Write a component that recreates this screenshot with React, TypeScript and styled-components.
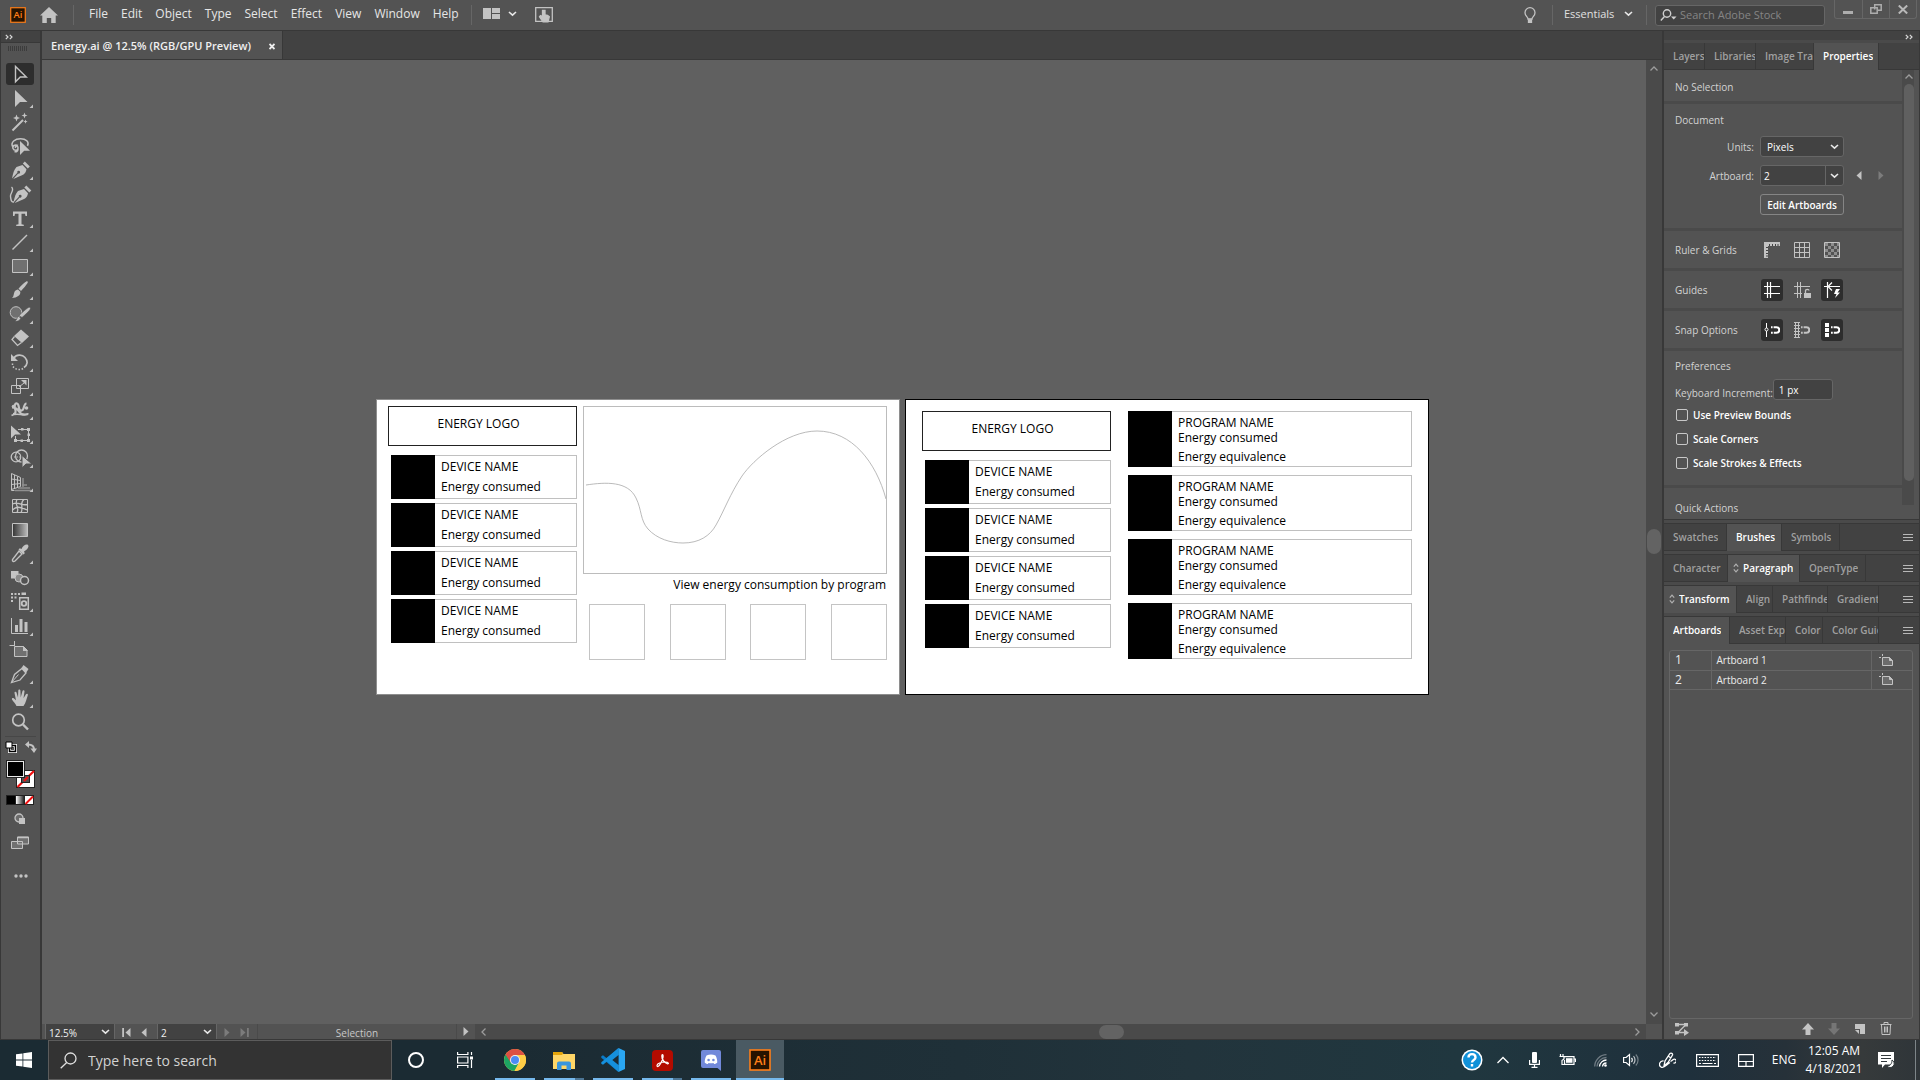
import React from "react";
import styled, { createGlobalStyle } from "styled-components";

const C = {
  panel: "#535353",
  dark: "#424242",
  line: "#383838",
  groove: "#4a4a4a",
  canvas: "#606060",
  edge: "#666666",
  icon: "#c3c3c3",
  text: "#d6d6d6",
  dim: "#a0a0a0",
  white: "#f0f0f0",
};

const Global = createGlobalStyle`
  * { box-sizing: border-box; }
  html, body { margin: 0; height: 100%; background: ${C.canvas}; overflow: hidden; }
  body { font-family: "Open Sans", "Noto Sans", sans-serif; font-size: 10px; line-height: 14px; color: ${C.text}; }
  button, input, select { font: inherit; color: inherit; margin: 0; padding: 0; border: 0; background: none; border-radius: 0; outline: none; }
  svg { display: block; flex: none; }
`;

const Screen = styled.div`
  display: grid;
  grid-template-rows: auto minmax(0, 1fr) auto;
  height: 100vh;
  background: ${C.panel};
`;

/* ---------- menu bar ---------- */
const MenuBar = styled.header`
  display: flex;
  align-items: center;
  height: 31px;
  padding-left: 10px;
  border-bottom: 1px solid ${C.line};
  font-size: 12px;
`;
const HomeButton = styled.button`
  margin: 0 15px 0 14px;
`;
const Rule = styled.span`
  width: 1px;
  height: 20px;
  background: ${C.edge};
`;
const Menus = styled.nav`
  display: flex;
  gap: 13px;
  padding: 0 12px 2px 15px;
`;
const MenuItem = styled.button`
  color: #e6e6e6;
  line-height: 20px;
`;
const LayoutButton = styled.button`
  display: flex;
  align-items: center;
  gap: 8px;
  margin: 0 18px 0 11px;
  padding-bottom: 3px;
`;
const MenuRight = styled.div`
  display: flex;
  align-items: center;
  align-self: stretch;
  margin-left: auto;
`;
const BulbButton = styled.button`
  padding: 0 16px 0 0;
`;
const Workspace = styled.button`
  display: flex;
  align-items: center;
  justify-content: space-between;
  width: 93px;
  padding: 0 13px 2px 11px;
  font-size: 11px;
  color: #e0e0e0;
`;
const StockSearch = styled.label`
  display: flex;
  align-items: center;
  gap: 3px;
  width: 170px;
  height: 21px;
  margin: 0 9px 0 8px;
  padding-left: 4px;
  border: 1px solid ${C.edge};
  border-radius: 3px;
  background: ${C.dark};
  input {
    width: 130px;
    font-size: 11px;
  }
  input::placeholder { color: #858585; opacity: 1; }
`;
const WindowButtons = styled.div`
  display: flex;
  align-self: flex-start;
  height: 19px;
  margin-right: 3px;
  border: 1px solid ${C.edge};
  border-top: 0;
  border-radius: 0 0 3px 3px;
`;
const WindowButton = styled.button`
  display: grid;
  place-items: center;
  width: 27px;
  & + & { border-left: 1px solid ${C.edge}; }
`;

/* ---------- body ---------- */
const Body = styled.div`
  display: grid;
  grid-template-columns: auto minmax(0, 1fr) auto;
  min-height: 0;
  border-bottom: 1px solid ${C.line};
`;
const Tools = styled.aside`
  display: flex;
  flex-direction: column;
  width: 42px;
  border-left: 1px solid ${C.line};
  border-right: 2px solid ${C.line};
`;
const CollapseBar = styled.div<{ $end?: boolean }>`
  display: flex;
  align-items: center;
  justify-content: ${(p) => (p.$end ? "flex-end" : "flex-start")};
  height: 12px;
  padding: 0 6px 0 4px;
  background: ${C.dark};
  border-bottom: 1px solid ${C.line};
`;
const Grip = styled.div`
  height: 19px;
  padding: 3px 0 0 7px;
`;
const ToolButton = styled.button<{ $on?: boolean }>`
  display: grid;
  place-items: center;
  width: 28px;
  height: 22px;
  margin: 1px 0 1px 5px;
  border-radius: 3px;
  background: ${(p) => (p.$on ? "#2d2d2d" : "transparent")};
  svg { margin: -1px 0; }
`;
const ToolRule = styled.div`
  height: 1px;
  margin: 2px 4px 0 4px;
  background: #474747;
`;
const SwatchRow = styled.div`
  display: flex;
  align-items: center;
  justify-content: space-between;
  height: 21px;
  padding: 0 3px 1px 4px;
`;
const SwatchBlock = styled.div`
  padding: 2px 0 7px 5px;
`;
const ColorModes = styled.div`
  padding: 0 0 2px 5px;
`;
const MoreButton = styled.button`
  display: grid;
  place-items: center;
  height: 24px;
  margin-top: 9px;
`;

const Doc = styled.main`
  display: grid;
  grid-template-rows: auto minmax(0, 1fr) auto;
  min-width: 0;
  border-right: 2px solid ${C.line};
`;
const DocTabs = styled.div`
  display: flex;
  height: 29px;
  background: ${C.dark};
  border-bottom: 1px solid ${C.line};
`;
const DocTab = styled.div`
  display: flex;
  align-items: center;
  justify-content: space-between;
  width: 241px;
  padding: 2px 7px 0 9px;
  background: ${C.panel};
  border-right: 1px solid ${C.line};
  font-size: 11px;
  font-weight: 600;
  color: ${C.white};
`;
const View = styled.div`
  display: grid;
  grid-template-columns: minmax(0, 1fr) 16px;
  min-height: 0;
`;
const Canvas = styled.div`
  position: relative;
  overflow: hidden;
  background: ${C.canvas};
`;
const VScroll = styled.div`
  display: flex;
  flex-direction: column;
  align-items: center;
  justify-content: space-between;
  padding: 5px 0 6px;
  background: ${C.groove};
`;
const Thumb = styled.div<{ $wide?: boolean }>`
  width: ${(p) => (p.$wide ? 25 : 14)}px;
  height: ${(p) => (p.$wide ? 14 : 25)}px;
  border-radius: 7px;
  background: #636363;
`;
const Space = styled.span<{ $grow: number }>`
  flex: ${(p) => p.$grow} 1 0;
`;
const Status = styled.footer`
  display: flex;
  height: 15px;
  background: ${C.panel};
`;
const StatusField = styled.label<{ $w: number }>`
  display: grid;
  grid-template-columns: minmax(0, 1fr) 17px;
  align-items: center;
  justify-items: center;
  width: ${(p) => p.$w}px;
  margin-left: 3px;
  padding-left: 3px;
  background: ${C.dark};
  border-left: 1px solid ${C.edge};
  border-right: 1px solid ${C.edge};
  color: ${C.white};
  input { width: 100%; padding-top: 2px; }
`;
const StatusNav = styled.div`
  display: flex;
  align-items: center;
  justify-content: center;
  gap: 10px;
  width: 39px;
  & > button { margin-top: 1px; }
`;
const StatusMode = styled.div`
  width: 200px;
  margin-left: 1px;
  border-left: 1px solid ${C.groove};
  border-right: 1px solid ${C.groove};
  line-height: 18px;
  text-align: center;
  color: #c8c8c8;
`;
const PlayButton = styled.button`
  width: 18px;
  display: grid;
  place-items: center;
`;
const HScroll = styled.div`
  display: flex;
  flex: 1;
  align-items: center;
  margin-right: 16px;
  padding: 0 5px;
  background: ${C.groove};
`;

/* ---------- artboards ---------- */
const Artboard = styled.section<{ $x: number; $active?: boolean }>`
  position: absolute;
  left: ${(p) => p.$x}px;
  top: 339px;
  display: flex;
  align-items: flex-start;
  gap: ${(p) => (p.$active ? 17 : 6)}px;
  width: 524px;
  height: 296px;
  padding: ${(p) => (p.$active ? "11px 16px" : "6px 11px")};
  background: #fff;
  border: 1px solid ${(p) => (p.$active ? "#000" : "#8e8e8e")};
  color: #000;
  font-size: 12px;
  font-weight: 500;
`;
const DeviceColumn = styled.div`
  display: flex;
  flex-direction: column;
  align-items: flex-end;
  gap: 4px;
  width: 189px;
`;
const LogoBox = styled.div`
  align-self: stretch;
  height: 40px;
  margin-bottom: 5px;
  padding-right: 8px;
  border: 1px solid #222;
  line-height: 34px;
  text-align: center;
`;
const Card = styled.div<{ $h: number; $w?: number }>`
  display: flex;
  width: ${(p) => p.$w ?? 186}px;
  height: ${(p) => p.$h}px;
  border: 1px solid #c0c0c0;
`;
const Block = styled.div`
  width: 44px;
  margin: -1px 6px -1px -1px;
  background: #000;
`;
const DeviceText = styled.div`
  padding-top: 1px;
  line-height: 20px;
`;
const ProgramText = styled.div`
  padding-top: 3px;
  line-height: 15px;
  p { margin: 0; }
  p:last-child { margin-top: 4px; }
`;
const ProgramColumn = styled.div`
  display: flex;
  flex-direction: column;
  gap: 8px;
`;
const GraphColumn = styled.div`
  width: 304px;
`;
const Graph = styled.div`
  height: 168px;
  border: 1px solid #bcbcbc;
`;
const Caption = styled.p`
  margin: 0 1px 9px 0;
  line-height: 21px;
  text-align: right;
`;
const Tiles = styled.div`
  display: flex;
  justify-content: space-between;
  padding-left: 6px;
`;
const Tile = styled.div`
  width: 56px;
  height: 56px;
  border: 1px solid #c4c4c4;
`;

/* ---------- right panels ---------- */
const Panels = styled.aside`
  display: flex;
  flex-direction: column;
  width: 256px;
  min-height: 0;
  border-right: 1px solid ${C.line};
  background: ${C.panel};
`;
const TabStrip = styled.div<{ $first?: boolean }>`
  display: flex;
  flex: none;
  height: ${(p) => (p.$first ? 27 : 28)}px;
  margin-top: ${(p) => (p.$first ? 0 : 3)}px;
  background: ${C.dark};
  border-top: ${(p) => (p.$first ? 0 : 1)}px solid ${C.line};
  box-shadow: inset 0 -1px ${C.line}, 0 -3px ${C.groove};
`;
const Tab = styled.button<{ $w: number; $on?: boolean; $arrow?: boolean }>`
  display: flex;
  align-items: center;
  gap: 4px;
  flex: none;
  width: ${(p) => p.$w}px;
  padding: 0 0 1px ${(p) => (p.$arrow ? 5 : 9)}px;
  border-right: 1px solid ${C.line};
  background: ${(p) => (p.$on ? C.panel : "transparent")};
  font-weight: 600;
  color: ${(p) => (p.$on ? "#fff" : C.dim)};
  span {
    min-width: 0;
    overflow: hidden;
    white-space: nowrap;
  }
`;
const MenuButton = styled.button`
  margin: 0 6px 0 auto;
`;
const Props = styled.div`
  display: grid;
  grid-template-columns: minmax(0, 1fr) 17px;
  flex: none;
  height: 450px;
  overflow: hidden;
  border-bottom: 1px solid ${C.line};
`;
const PropsScroll = styled.div`
  display: flex;
  flex-direction: column;
  align-items: center;
  gap: 3px;
  width: 12px;
  height: 435px;
  padding-top: 3px;
  background: ${C.groove};
  border-left: 1px solid ${C.groove};
`;
const PropsThumb = styled.div`
  width: 10px;
  height: 397px;
  border-radius: 5px;
  background: ${C.canvas};
`;
const Section = styled.section<{ $pad: string }>`
  padding: ${(p) => p.$pad};
  border-bottom: 3px solid ${C.groove};
  color: #d2d2d2;
  font-weight: 500;
`;
const Title = styled.h2`
  margin: 0;
  font-size: 10px;
  line-height: 14px;
  font-weight: 500;
`;
const Form = styled.div`
  display: grid;
  grid-template-columns: 79px 84px auto;
  gap: 8px 6px;
  align-items: center;
  margin-top: 9px;
  & > label { text-align: right; }
`;
const Pick = styled.div<{ $split?: boolean }>`
  display: grid;
  grid-template-columns: minmax(0, 1fr) 18px;
  height: 21px;
  align-items: center;
  border: 1px solid ${C.edge};
  border-radius: 3px;
  background: ${C.dark};
  color: #fff;
  select {
    grid-area: 1 / 1 / 2 / 3;
    appearance: none;
    height: 19px;
    padding-left: ${(p) => (p.$split ? 3 : 6)}px;
    font-weight: 500;
  }
  select option { color: #000; }
  span {
    grid-area: 1 / 2 / 2 / 3;
    display: grid;
    place-items: center;
    height: 19px;
    border-left: 1px solid ${(p) => (p.$split ? C.edge : "transparent")};
    pointer-events: none;
  }
`;
const Arrows = styled.div`
  display: flex;
  gap: 16px;
  padding-left: 6px;
`;
const EditButton = styled.button`
  grid-column: 2;
  height: 21px;
  border: 1px solid #858585;
  border-radius: 3px;
  color: #fff;
  font-weight: 600;
`;
const IconRow = styled.div`
  display: flex;
  align-items: center;
  height: 37px;
  ${Title} { width: 86px; }
`;
const IconButton = styled.button<{ $on?: boolean }>`
  display: grid;
  place-items: center;
  width: 22px;
  height: 22px;
  margin-right: 8px;
  border-radius: 3px;
  background: ${(p) => (p.$on ? "#2d2d2d" : "transparent")};
`;
const Increment = styled.label`
  display: flex;
  align-items: flex-end;
  margin: 6px 0 3px;
  input {
    width: 60px;
    height: 21px;
    padding-left: 5px;
    border: 1px solid ${C.edge};
    border-radius: 3px;
    background: ${C.dark};
    color: #fff;
  }
`;
const Check = styled.label`
  display: flex;
  align-items: center;
  gap: 5px;
  height: 24px;
  padding-left: 1px;
  color: #fff;
  font-weight: 600;
  input {
    appearance: none;
    width: 12px;
    height: 12px;
    border: 1px solid #c8c8c8;
    border-radius: 2px;
  }
`;
const ListBox = styled.div`
  flex: 1;
  min-height: 0;
  margin: 6px 6px 0 5px;
  border: 1px solid ${C.edge};
  border-radius: 3px;
`;
const List = styled.table`
  width: 100%;
  border-collapse: collapse;
  table-layout: fixed;
  td {
    height: 19px;
    padding: 0 5px;
    border-bottom: 1px solid ${C.edge};
    color: #ececec;
    font-weight: 500;
  }
  td:first-child { width: 41px; font-size: 12px; }
  td + td { border-left: 1px solid ${C.edge}; }
  td:last-child { width: 41px; padding-left: 7px; }
`;
const PanelFooter = styled.div`
  display: flex;
  align-items: center;
  justify-content: space-between;
  height: 20px;
  padding: 0 27px 1px 11px;
`;
const FooterTools = styled.div`
  display: flex;
  align-items: center;
  gap: 14px;
`;

/* ---------- taskbar ---------- */
const Taskbar = styled.footer`
  display: flex;
  height: 40px;
  background: linear-gradient(90deg, #1b2b33 0, #1b2b33 26%, #1f3038 50%, #22343c 62%, #20373f 76%, #1f303c 88%, #263139 93%, #363a3b 97%, #2f3539 100%);
  color: #fff;
`;
const Search = styled.label`
  display: flex;
  align-items: center;
  gap: 11px;
  width: 344px;
  padding-left: 11px;
  background: #333333;
  border: 1px solid #5c5c5c;
  input { flex: 1; font-size: 14px; }
  input::placeholder { color: #d2d2d2; opacity: 1; }
`;
const TaskButton = styled.button<{ $on?: boolean }>`
  position: relative;
  display: grid;
  place-items: center;
  width: 48px;
  height: 40px;
  margin-right: 1px;
  background: ${(p) => (p.$on ? "#4a5a63" : "transparent")};
`;
const Apps = styled.div`
  display: flex;
  margin-left: 1px;
`;
const Running = styled.i<{ $kind: string }>`
  position: absolute;
  bottom: 0;
  left: ${(p) => (p.$kind === "full" ? 0 : 4)}px;
  right: ${(p) => (p.$kind === "full" ? 0 : 4)}px;
  height: 2px;
  background: ${(p) =>
    p.$kind === "many"
      ? "linear-gradient(90deg, #76b9ed 31px, #4d7696 31px)"
      : "#76b9ed"};
`;
const Tray = styled.div`
  display: flex;
  margin-left: auto;
`;
const TrayButton = styled.button<{ $w: number }>`
  display: grid;
  place-items: center;
  width: ${(p) => p.$w}px;
  font-size: 12px;
  line-height: 18px;
  white-space: nowrap;
`;
const Peek = styled.button`
  width: 5px;
  margin-left: 9px;
  border-left: 1px solid #7d8589;
`;

/* ---------- drawings ---------- */
const ChevronDown = ({ s = "#e8e8e8" }: { s?: string }) => (
  <svg width="9" height="6" viewBox="0 0 9 6" fill="none" stroke={s} strokeWidth="1.6">
    <path d="M1 1l3.500 3.200L8 1" />
  </svg>
);
const Caret = ({ r = 0 }: { r?: number }) => (
  <svg width="8" height="8" viewBox="0 0 8 8" fill="none" stroke="#9c9c9c" strokeWidth="1.300">
    <path d="M0.500 5.500L4 2l3.500 3.500" transform={`rotate(${r} 4 4)`} />
  </svg>
);
const Chevrons = () => (
  <svg width="8" height="6" viewBox="0 0 8 6" fill="none" stroke="#d8d8d8" strokeWidth="1.200">
    <path d="M0.800 0.800L3 3 0.800 5.200M4.800 0.800L7 3 4.800 5.200" />
  </svg>
);
const Tri = ({ r = 0, c = C.icon, bar }: { r?: number; c?: string; bar?: boolean }) => (
  <svg width={bar ? 9 : 6} height="9" viewBox={bar ? "0 0 9 9" : "0 0 6 9"} fill={c}>
    <g transform={`rotate(${r} ${bar ? 4.5 : 3} 4.500)`}>
      <path d="M0.500 0L5.500 4.500 0.500 9z" />
      {bar && <path d="M7 0h1.800v9H7z" />}
    </g>
  </svg>
);
const Hamburger = () => (
  <svg width="10" height="8" viewBox="0 0 10 8" stroke="#b8b8b8">
    <path d="M0 .5h10M0 3.500h10M0 6.500h10" />
  </svg>
);
const UpDown = () => (
  <svg width="6" height="10" viewBox="0 0 6 10" fill="none" stroke="#b0b0b0" strokeWidth="1.200">
    <path d="M.8 3.600L3 1.200l2.200 2.400M.8 6.400L3 8.800l2.200-2.400" />
  </svg>
);
const AiLogo = ({ size }: { size: number }) => (
  <svg width={size} height={size} viewBox="0 0 22 22">
    <rect x="1" y="1" width="20" height="20" fill="#261300" stroke="#ff7f18" strokeWidth="1.600" />
    <text x="11" y="15.500" textAnchor="middle" fontFamily="Open Sans, sans-serif" fontWeight="600" fontSize="13" fill="#ff7f18">
      Ai
    </text>
  </svg>
);

const F = { fill: C.icon, stroke: "none" };
const nib = (
  <>
    <path {...F} d="M6 20.500C7 15.500 8 11.500 10.500 9L16.500 7l4 4.200c-.5 2.800-1.500 4-3 5.300-2.500 1.500-6 2.500-10.300 4.500l5-5.500a1.400 1.400 0 1 0-.8-.8z" />
    <path {...F} d="M16.800 5.500l2-2 5 5-2 2z" />
  </>
);
const corner = <path {...F} d="M27 18.500V22h-3.500z" />;

const tools: [string, React.ReactNode, boolean?][] = [
  ["Selection", <path d="M9.500 4.500v15.300l4.800-4.800h6z" strokeWidth="1.400" />],
  ["Direct Selection", <path {...F} d="M9 4v17l5-5h7.500z" />, true],
  ["Magic Wand", <><path d="M6.500 20.500L17 10" strokeWidth="2" /><path {...F} d="M10.500 4.500l1 2.500 2.500 1-2.500 1-1 2.500-1-2.500-2.500-1 2.500-1zM18.500 2.500l.8 2.200 2.200.8-2.200.8-.8 2.200-.8-2.200-2.200-.8 2.200-.8zM19.500 9.500l.6 1.500 1.500.6-1.500.6-.6 1.500-.6-1.500-1.500-.6 1.500-.6z" /></>],
  ["Lasso", <><path d="M6.500 12.500C4.500 8 9 4.800 14.500 4.800s9 3 7 7M12 11.500c-3-1.500-6 .5-5 3s5 2.500 5-.5-3-2-2.500 0M12 15c0 3-2 3-3.500 2.500" strokeWidth="1.500" /><path {...F} d="M14 7v14l4.200-4.200H24z" /></>],
  ["Pen", nib, true],
  ["Curvature", <><g transform="translate(1.500 0)">{nib}</g><path d="M5.500 5C9 8 4 11 4.500 14.500S5 20 8 20" strokeWidth="1.400" /></>],
  ["Type", <path {...F} d="M7 5.500h14V10h-1.500l-.5-2.300h-3.500v10.600l2.300.5V20h-7.600v-1.200l2.300-.5V7.700H9L8.500 10H7z" />, true],
  ["Line Segment", <path d="M6.500 19.500L21 5" strokeWidth="1.500" />, true],
  ["Rectangle", <path d="M6.500 5.500h15v13h-15z" fill="#707070" />, true],
  ["Paintbrush", <path {...F} d="M21.500 3.500c1 .8-.5 3-6.500 9.500l-2.500-2.300C18 5 20.500 2.800 21.500 3.500zM12 11.500l2.300 2.300c.5 3.500-3.300 6-8.300 6.200 2-1.500 1.500-4 2.500-6.200 1-1.600 2-2 3.500-2.300z" />, true],
  ["Shaper", <><circle cx="10" cy="10.500" r="5.800" fill="#707070" /><path {...F} stroke={C.panel} strokeWidth=".6" d="M24 5.500c1.500 1-.5 3.500-8 10L13 13.500C20.500 6.500 23 4.500 24 5.500zM12.500 14.300l2.300 2c-1 2.200-2.800 3.300-5.800 3 1.800-1 1.800-3.800 3.500-5z" /></>, true],
  ["Eraser", <><path {...F} d="M15 3.500l8 7-7 6.500-8-7z" /><path d="M8.500 10.500l-2.500 3 5.500 6 4-3" strokeWidth="1.300" /></>, true],
  ["Rotate", <><path d="M7.500 8.500C10 4.500 16 4 19 7.500s3 7-1 10" strokeWidth="1.700" /><path d="M17 18.500C13 21 8 19 6.500 15.500V12" strokeDasharray="1.500 1.700" strokeWidth="1.500" /><path {...F} d="M5 4v7h7z" /></>, true],
  ["Scale", <><path d="M10.500 4.500h12v10h-12zM5.500 11.500h9v8h-9z" /><path d="M13 13l5-4" /><path {...F} d="M15 6h5.500v5.500z" /></>, true],
  ["Width", <><path d="M7 16c3 0 3-3 2-5.500S9 5 11 5.500s1.500 4 2.500 6 3.500 1 4-1 1-5 3-5M6 9.500c4 0 5 1 7 4s5 4 9 2.500" strokeWidth="2.200" /><path d="M5.500 17.500c6-3.500 12 1.500 17-2" strokeWidth="1.500" /><circle cx="7.500" cy="8.500" r="1.800" {...F} /><circle cx="20.500" cy="10" r="1.800" {...F} /></>, true],
  ["Free Transform", <><path d="M12 7.500h10.500v11h-13V14" /><path {...F} d="M5 3.500v13l4-4h6zM21 6h3v3h-3zM21 17h3v3h-3zM8 17h3v3H8zM15 6h2.500v2.500H15zM21.500 11.500H24V14h-2.500zM14.500 17.500H17V20h-2.500z" /></>, true],
  ["Shape Builder", <><circle cx="10" cy="11" r="4.800" strokeWidth="1.300" /><circle cx="15.500" cy="10" r="6" strokeWidth="1.300" /><path d="M8 11h9" strokeDasharray="1.300 1.300" /><path {...F} stroke={C.panel} d="M16 9.500v12.300l4-3.800h6z" /></>, true],
  ["Perspective Grid", <><path d="M5.500 3.500v17h3M5.500 3.500l9 4v9l-9 3M5.500 9l9 1.500M5.500 14.500l9-1M8.500 5v13.500M11.500 6.500v11" /><path d="M17 8v9M16 15h5M12 18h12M9 20.500h16" stroke="#909090" strokeWidth="1.500" /></>, true],
  ["Mesh", <><path d="M6.500 5.500h15v13h-15z" /><path d="M6.500 10c6-3 8 2 15 .5M6.500 16c5-5 9-2 15 0M11 5.500c-3 5 3 8 0 13M18 5.500c-5 3 0 9-3 13" strokeWidth="1.300" /></>],
  ["Gradient", <path d="M6.500 5.500h15v13h-15z" fill="url(#toolGradient)" />],
  ["Eyedropper", <><path d="M13 9l3 3-7 7c-1.500 1-3 .5-2.500-1.500z" strokeWidth="1.400" /><path {...F} d="M12.500 7.500l1.300-1.300 1.700.8c1-3 5-5.500 6.500-4s-.8 5-4 6.500l.8 1.700L17.500 12.500z" /></>, true],
  ["Blend", <><path {...F} d="M5 5h7.500v7.500H5z" /><circle cx="13" cy="12" r="4" fill="#8a8a8a" /><circle cx="18.500" cy="14.500" r="4" fill={C.panel} strokeWidth="1.500" /></>],
  ["Symbol Sprayer", <><path {...F} d="M5 3h2v2H5zM8.500 3h2v2h-2zM12 3h2v2h-2zM5 6.500h2v2H5zM8.500 6.500h2v2h-2zM5 10h2v2H5zM15.500 2.500h4.500V5h-4.500z" /><path d="M13.700 7.700h8.600v11.600h-8.600z" strokeWidth="1.500" /><circle cx="18" cy="13.500" r="2.300" strokeWidth="1.800" /></>, true],
  ["Column Graph", <><path d="M5.500 4v15.500H22" /><path {...F} d="M9 11h3v7H9zM13.500 5h3v13h-3zM18.500 8h3v10h-3z" /></>, true],
  ["Artboard", <><path d="M3.500 7.500h5M8.500 3v5M8.500 8.500h9l3.500 3.500v6.500H8.500z" fill="#707070" /><path {...F} d="M17 8v5h5z" /></>],
  ["Slice", <><path d="M16 6.500l4 4.500-6 7-8.500 2.500 3-8z" strokeWidth="1.300" /><path d="M5.500 20.500l7-8" /><path {...F} d="M15.500 6l2-3 5 4-2.500 4z" /></>, true],
  ["Hand", <path {...F} d="M10.500 20c-1-2.500-3.500-4.500-4.500-6.500-.6-1.400 1-2 2-1l2 1.800L8.500 7c-.2-1.500 1.600-1.800 2-.4l1.500 5L12.300 4.500c0-1.500 2-1.500 2.100 0l.3 7L16.500 5c.4-1.400 2.200-1 2 .5L17.500 12.300l2.500-4c.8-1.200 2.300-.3 1.800 1C20.500 13 20 17 17.500 20z" />, true],
  ["Zoom", <><circle cx="12.500" cy="10" r="5.800" strokeWidth="1.700" /><path d="M17 14.500l5 5" strokeWidth="2.400" /></>],
];

const Glyph = ({ children, w = 16, h = 16, s = C.icon, sw = 1 }: { children: React.ReactNode; w?: number; h?: number; s?: string; sw?: number }) => (
  <svg width={w} height={h} viewBox={`0 0 ${w} ${h}`} fill="none" stroke={s} strokeWidth={sw}>
    {children}
  </svg>
);

const Magnet = ({ c }: { c: string }) => (
  <path d="M7 5.200h5.500a2.800 2.800 0 0 1 0 5.600H7" stroke={c} strokeWidth="2" strokeDasharray="1.600 1 14.200 1 2" />
);

const Devices = () => (
  <DeviceColumn>
    <LogoBox>ENERGY LOGO</LogoBox>
    {[1, 2, 3, 4].map((n) => (
      <Card key={n} $h={44}>
        <Block />
        <DeviceText>
          <div>DEVICE NAME</div>
          <div>Energy consumed</div>
        </DeviceText>
      </Card>
    ))}
  </DeviceColumn>
);

type TabDef = { name: string; w: number; on?: boolean; arrow?: boolean };
const Strip = ({ tabs, first }: { tabs: TabDef[]; first?: boolean }) => (
  <TabStrip $first={first} role="tablist">
    {tabs.map((t) => (
      <Tab key={t.name} $w={t.w} $on={t.on} $arrow={t.arrow} role="tab" aria-selected={!!t.on}>
        {t.arrow && <UpDown />}
        <span>{t.name}</span>
      </Tab>
    ))}
    {!first && (
      <MenuButton aria-label="Panel menu">
        <Hamburger />
      </MenuButton>
    )}
  </TabStrip>
);

const ArtboardIcon = () => (
  <Glyph w={15} h={13}>
    <path d="M0 3.500h2M3.500 0v2M3.500 3.500h7l3 3v5h-10z" fill="#6c6c6c" />
    <path d="M10.500 3.500v3h3" fill={C.icon} />
  </Glyph>
);

export default function App() {
  return (
    <Screen>
      <Global />
      <MenuBar>
        <AiLogo size={16} />
        <HomeButton aria-label="Home">
          <svg width="18" height="16" viewBox="0 0 18 16" fill={C.icon}>
            <path d="M9 0l9 8.500h-2.300V16h-4.500v-5H6.800v5H2.300V8.500H0z" />
          </svg>
        </HomeButton>
        <Rule />
        <Menus>
          {["File", "Edit", "Object", "Type", "Select", "Effect", "View", "Window", "Help"].map((m) => (
            <MenuItem key={m}>{m}</MenuItem>
          ))}
        </Menus>
        <Rule />
        <LayoutButton aria-label="Arrange documents">
          <svg width="17" height="11" viewBox="0 0 17 11" fill={C.icon}>
            <path d="M0 0h8v11H0zM9 0h8v5H9zM9 6h8v5H9z" />
          </svg>
          <ChevronDown />
        </LayoutButton>
        <button aria-label="Touch workspace">
          <svg width="18" height="16" viewBox="0 0 18 16" fill="none" stroke={C.icon} strokeWidth="1.300">
            <path d="M.7 .7h16.600v13.600H.7z" />
            <path d="M7.500 3.500v6L5.500 8.500l-1 1.300 3.500 5h5l1.300-5-1.800-1.500-2.500-.5V3.500z" fill={C.icon} />
          </svg>
        </button>
        <MenuRight>
          <BulbButton aria-label="Learn">
            <Glyph w={12} h={17} sw={1.300}>
              <path d="M4 12c0-2-3-3-3-6.300a5 5 0 0 1 10 0C11 9 8 10 8 12z" />
              <path d="M4.500 13h3v2.300h-3z" fill={C.icon} />
            </Glyph>
          </BulbButton>
          <Rule />
          <Workspace>
            Essentials <ChevronDown />
          </Workspace>
          <Rule />
          <StockSearch>
            <Glyph w={17} h={13} s="#d0d0d0" sw={1.400}>
              <circle cx="7" cy="4.500" r="3.700" />
              <path d="M4.500 7.500L.8 11.500" />
              <path d="M11 7.500h5.500L13.700 10.500z" fill="#d0d0d0" stroke="none" />
            </Glyph>
            <input aria-label="Search Adobe Stock" placeholder="Search Adobe Stock" />
          </StockSearch>
          <WindowButtons>
            <WindowButton aria-label="Minimize">
              <Glyph w={11} h={10} s="#adadad" sw={3}><path d="M0 8.500h10" /></Glyph>
            </WindowButton>
            <WindowButton aria-label="Restore">
              <Glyph w={12} h={10} s="#adadad" sw={1.500}><path d="M4.700 5.500V.8h6.500v5.400H8M.8 3.800h6.400v5.400H.8z" /></Glyph>
            </WindowButton>
            <WindowButton aria-label="Close">
              <Glyph w={10} h={9} s="#b8b8b8" sw={2}><path d="M.8.500l8.400 8M9.200.5L.8 8.500" /></Glyph>
            </WindowButton>
          </WindowButtons>
        </MenuRight>
      </MenuBar>

      <Body>
        <Tools>
          <CollapseBar><Chevrons /></CollapseBar>
          <Grip>
            <svg width="20" height="5" viewBox="0 0 20 5" stroke="#3c3c3c">
              <path d="M.5 0v5M2.500 0v5M4.500 0v5M6.500 0v5M8.500 0v5M10.500 0v5M12.500 0v5M14.500 0v5M16.500 0v5M18.500 0v5" />
            </svg>
          </Grip>
          {tools.map(([name, art, more], i) => (
            <ToolButton key={name} $on={i === 0} aria-label={name}>
              <svg width="28" height="24" viewBox="0 0 28 24" fill="none" stroke={C.icon} strokeWidth="1">
                {name === "Gradient" && (
                  <defs>
                    <linearGradient id="toolGradient">
                      <stop offset="0" stopColor="#333" />
                      <stop offset="1" stopColor="#bbb" />
                    </linearGradient>
                  </defs>
                )}
                {art}
                {more && corner}
              </svg>
            </ToolButton>
          ))}
          <ToolRule />
          <SwatchRow>
            <button aria-label="Default fill and stroke">
              <Glyph w={12} h={12}>
                <path d="M4.500 4.500h6v6h-6z" stroke="#fff" strokeWidth="3" />
                <path d="M4.500 4.500h6v6h-6z" stroke="#000" strokeWidth="1.500" />
                <path d="M1 1h6v6H1z" fill="#fff" stroke="#000" />
              </Glyph>
            </button>
            <button aria-label="Swap fill and stroke">
              <Glyph w={12} h={12} sw={2}>
                <path d="M3 3.500c4 0 6 1 6 5" />
                <path {...F} d="M0 3.500L4 0v7zM5.500 7.500H12L9 12z" />
              </Glyph>
            </button>
          </SwatchRow>
          <SwatchBlock>
            <svg width="29" height="28" viewBox="0 0 29 28">
              <rect x="10.500" y="10.500" width="18" height="17" fill="#fff" stroke="#222" />
              <path d="M11.500 27L28 11" stroke="#f01010" strokeWidth="2.200" />
              <rect x="15.500" y="15.500" width="8" height="7" fill={C.panel} stroke="#222" />
              <path d="M18 21l4-4" stroke="#f01010" strokeWidth="2.200" />
              <rect x=".5" y=".5" width="18" height="17" fill="#000" stroke="#222" />
              <rect x="1.500" y="1.500" width="16" height="15" fill="#000" stroke="#e8e8e8" />
            </svg>
          </SwatchBlock>
          <ColorModes>
            <svg width="28" height="10" viewBox="0 0 28 10">
              <defs>
                <linearGradient id="modeGradient">
                  <stop offset="0" stopColor="#fff" />
                  <stop offset="1" stopColor="#222" />
                </linearGradient>
              </defs>
              <rect width="28" height="10" fill="#222" />
              <rect x="1" y="1" width="8" height="8" fill="#000" />
              <rect x="10" y="1" width="8" height="8" fill="url(#modeGradient)" />
              <rect x="19" y="1" width="8" height="8" fill="#fff" />
              <path d="M19.500 9L27 1.500" stroke="#f01010" strokeWidth="2" />
            </svg>
          </ColorModes>
          <ToolButton aria-label="Drawing mode">
            <Glyph w={12} h={12} sw={1.300}>
              <circle cx="5" cy="5" r="4" fill="#6c6c6c" />
              <path {...F} d="M5 5h6v6H5z" />
            </Glyph>
          </ToolButton>
          <ToolButton aria-label="Screen mode">
            <Glyph w={18} h={14}>
              <path d="M.5 5.500h11v7H.5zM6.500 1h11v7h-11z" fill="#707070" />
              <path d="M6.500 1.500h11" strokeWidth="1.500" />
            </Glyph>
          </ToolButton>
          <MoreButton aria-label="Edit toolbar">
            <Glyph w={14} h={4}>
              <g {...F}><circle cx="2" cy="2" r="1.700" /><circle cx="7" cy="2" r="1.700" /><circle cx="12" cy="2" r="1.700" /></g>
            </Glyph>
          </MoreButton>
        </Tools>

        <Doc>
          <DocTabs>
            <DocTab>
              Energy.ai @ 12.5% (RGB/GPU Preview)
              <button aria-label="Close document">
                <Glyph w={6} h={7} s="#f0f0f0" sw={1.800}><path d="M.5 1l5 5M5.500 1l-5 5" /></Glyph>
              </button>
            </DocTab>
          </DocTabs>
          <View>
            <Canvas>
              <Artboard $x={334}>
                <Devices />
                <GraphColumn>
                  <Graph>
                    <svg width="302" height="166" viewBox="1 1 302 166" fill="none" stroke="#a8a8a8" strokeWidth=".8">
                      <path d="M3 79C23 76 45 75 53 92C59 104 57 114 65 123C74 133 88 137 100 137C116 137 127 130 133 119C141 105 147 88 159 70C170 54 203 25 234 25C269 25 293 56 303 93" />
                    </svg>
                  </Graph>
                  <Caption>View energy consumption by program</Caption>
                  <Tiles><Tile /><Tile /><Tile /><Tile /></Tiles>
                </GraphColumn>
              </Artboard>
              <Artboard $x={863} $active>
                <Devices />
                <ProgramColumn>
                  {[1, 2, 3, 4].map((n) => (
                    <Card key={n} $h={56} $w={284}>
                      <Block />
                      <ProgramText>
                        <p>PROGRAM NAME</p>
                        <p>Energy consumed</p>
                        <p>Energy equivalence</p>
                      </ProgramText>
                    </Card>
                  ))}
                </ProgramColumn>
              </Artboard>
            </Canvas>
            <VScroll><Caret /><Thumb /><Caret r={180} /></VScroll>
          </View>
          <Status>
            <StatusField $w={70}>
              <input aria-label="Zoom level" defaultValue="12.5%" />
              <ChevronDown />
            </StatusField>
            <StatusNav>
              <button aria-label="First artboard"><Tri r={180} bar /></button>
              <button aria-label="Previous artboard"><Tri r={180} /></button>
            </StatusNav>
            <StatusField $w={60}>
              <input aria-label="Artboard number" defaultValue="2" />
              <ChevronDown />
            </StatusField>
            <StatusNav>
              <button aria-label="Next artboard"><Tri c="#7c7c7c" /></button>
              <button aria-label="Last artboard"><Tri c="#7c7c7c" bar /></button>
            </StatusNav>
            <StatusMode>Selection</StatusMode>
            <PlayButton aria-label="Status options"><Tri /></PlayButton>
            <HScroll>
              <Caret r={-90} />
              <Space $grow={6} />
              <Thumb $wide />
              <Space $grow={5} />
              <Caret r={90} />
            </HScroll>
          </Status>
        </Doc>

        <Panels>
          <CollapseBar $end><Chevrons /></CollapseBar>
          <Strip
            first
            tabs={[
              { name: "Layers", w: 41 },
              { name: "Libraries", w: 51 },
              { name: "Image Trace", w: 58 },
              { name: "Properties", w: 65, on: true },
            ]}
          />
          <Props>
            <div>
              <Section $pad="10px 11px 7px"><Title>No Selection</Title></Section>
              <Section $pad="9px 11px 13px">
                <Title>Document</Title>
                <Form>
                  <label htmlFor="units">Units:</label>
                  <Pick>
                    <select id="units"><option>Pixels</option></select>
                    <span><ChevronDown /></span>
                  </Pick>
                  <i />
                  <label htmlFor="artboard">Artboard:</label>
                  <Pick $split>
                    <select id="artboard" defaultValue="2"><option>1</option><option>2</option></select>
                    <span><ChevronDown /></span>
                  </Pick>
                  <Arrows>
                    <button aria-label="Previous"><Tri r={180} /></button>
                    <button aria-label="Next"><Tri c="#7c7c7c" /></button>
                  </Arrows>
                  <EditButton>Edit Artboards</EditButton>
                </Form>
              </Section>
              <Section $pad="0 11px">
                <IconRow>
                  <Title>Ruler &amp; Grids</Title>
                  <IconButton aria-label="Show rulers">
                    <Glyph>
                      <path {...F} d="M0 0h16v4H4v12H0z" />
                      <path d="M5.500 2v2M8.500 2v2M11.500 2v2M14 2v2M2 5.500h2M2 8.500h2M2 11.500h2M2 14h2" stroke="#444" />
                    </Glyph>
                  </IconButton>
                  <IconButton aria-label="Show grid">
                    <Glyph><path d="M.5.5h15v15H.5zM5.500 0v16M10.500 0v16M0 5.500h16M0 10.500h16" /></Glyph>
                  </IconButton>
                  <IconButton aria-label="Show transparency grid">
                    <Glyph>
                      <path fill="#8e8e8e" stroke="none" d="M1 1h3v3H1zM7 1h3v3H7zM13 1h2v3h-2zM4 4h3v3H4zM10 4h3v3h-3zM1 7h3v3H1zM7 7h3v3H7zM13 7h2v3h-2zM4 10h3v3H4zM10 10h3v3h-3zM1 13h3v2H1zM7 13h3v2H7zM13 13h2v2h-2z" />
                      <path d="M.5.5h15v15H.5z" />
                    </Glyph>
                  </IconButton>
                </IconRow>
              </Section>
              <Section $pad="0 11px">
                <IconRow>
                  <Title>Guides</Title>
                  <IconButton $on aria-label="Show guides">
                    <Glyph s="#fff" sw={1.200}><path d="M3.500 0v16M6.500 0v16M0 4.500h16M0 11.500h16" /></Glyph>
                  </IconButton>
                  <IconButton aria-label="Lock guides">
                    <Glyph w={18}>
                      <path d="M4.500 0v16M7.500 0v16M1 4.500h16M1 11.500h8" />
                      <path {...F} d="M11 11h7v5h-7z" />
                      <path d="M12.500 11V8.500c0-1.500 3.500-1.500 3.500 0" strokeWidth="1.300" />
                    </Glyph>
                  </IconButton>
                  <IconButton $on aria-label="Smart guides">
                    <Glyph s="#fff" sw={1.200}>
                      <path d="M3.500 0v16M0 4.500h16" />
                      <path d="M8 .5l-4 4 4 4" />
                      <path fill="#fff" stroke="none" d="M12 7l-2 5h2.500l-1.500 4 5-5.500h-2.500L16 7z" />
                    </Glyph>
                  </IconButton>
                </IconRow>
              </Section>
              <Section $pad="0 11px">
                <IconRow>
                  <Title>Snap Options</Title>
                  <IconButton $on aria-label="Snap to point">
                    <Glyph s="#fff">
                      <path d="M2.500 1v5M2.500 9v6" /><circle cx="2.500" cy="7.500" r="1.500" />
                      <Magnet c="#fff" />
                    </Glyph>
                  </IconButton>
                  <IconButton aria-label="Snap to grid">
                    <Glyph><path d="M1.500.500v15M4.500.5v15M0 .5h6M0 3.500h6M0 6.500h6M0 9.500h6M0 12.500h6M0 15.500h6" /><Magnet c={C.icon} /></Glyph>
                  </IconButton>
                  <IconButton $on aria-label="Snap to pixel">
                    <Glyph s="#fff"><path fill="#fff" stroke="none" d="M1 1h4v4H1zM1 6h4v4H1zM1 11h4v4H1z" /><Magnet c="#fff" /></Glyph>
                  </IconButton>
                </IconRow>
              </Section>
              <Section $pad="8px 11px 10px">
                <Title>Preferences</Title>
                <Increment>
                  Keyboard Increment:
                  <input defaultValue="1 px" />
                </Increment>
                <Check><input type="checkbox" />Use Preview Bounds</Check>
                <Check><input type="checkbox" />Scale Corners</Check>
                <Check><input type="checkbox" />Scale Strokes &amp; Effects</Check>
              </Section>
              <Section $pad="13px 11px"><Title>Quick Actions</Title></Section>
            </div>
            <PropsScroll><Caret /><PropsThumb /></PropsScroll>
          </Props>
          <Strip tabs={[{ name: "Swatches", w: 63 }, { name: "Brushes", w: 55, on: true }, { name: "Symbols", w: 58 }]} />
          <Strip tabs={[{ name: "Character", w: 64 }, { name: "Paragraph", w: 72, on: true, arrow: true }, { name: "OpenType", w: 66 }]} />
          <Strip tabs={[{ name: "Transform", w: 73, on: true, arrow: true }, { name: "Align", w: 36 }, { name: "Pathfinder", w: 55 }, { name: "Gradient", w: 51 }]} />
          <Strip tabs={[{ name: "Artboards", w: 66, on: true }, { name: "Asset Export", w: 56 }, { name: "Color", w: 37 }, { name: "Color Guide", w: 56 }]} />
          <ListBox>
            <List>
              <tbody>
                {[1, 2].map((n) => (
                  <tr key={n}>
                    <td>{n}</td>
                    <td>Artboard {n}</td>
                    <td><ArtboardIcon /></td>
                  </tr>
                ))}
              </tbody>
            </List>
          </ListBox>
          <PanelFooter>
            <button aria-label="Rearrange all artboards">
              <Glyph w={14} h={14} sw={1.400}>
                <path d="M3 2.500h8L3 10.500h8" />
                <path {...F} d="M0 1h4v3.500H0zM9 1h4v3.500H9zM0 9h4v3.500H0zM9 7l5 3.700L9 14z" />
              </Glyph>
            </button>
            <FooterTools>
              <button aria-label="Move up"><Glyph w={12} h={12}><path {...F} d="M6 0l6 6.500H8.500V12h-5V6.500H0z" /></Glyph></button>
              <button aria-label="Move down"><Glyph w={12} h={12}><path fill="#757575" stroke="none" d="M6 12l6-6.500H8.500V0h-5v5.500H0z" /></Glyph></button>
              <button aria-label="New artboard"><Glyph w={12} h={12}><path {...F} d="M1 1h10v10H6V6H1zM1 7h4v4z" /></Glyph></button>
              <button aria-label="Delete artboard"><Glyph w={12} h={13}><path d="M.5 2.500h11M4 2V.5h4V2M1.500 3l.5 9.500h8l.5-9.500M4.500 4.500v6M6 4.500v6M7.500 4.500v6" /></Glyph></button>
            </FooterTools>
          </PanelFooter>
        </Panels>
      </Body>

      <Taskbar>
        <TrayButton $w={48} aria-label="Start">
          <Glyph><path fill="#fff" stroke="none" d="M0 2.300l6.500-.9v6.200H0zM7.300 1.300L16 0v7.600H7.300zM0 8.400h6.500v6.200L0 13.700zM7.300 8.400H16V16l-8.700-1.300z" /></Glyph>
        </TrayButton>
        <Search>
          <Glyph w={17} h={17} s="#e0e0e0" sw={1.300}><circle cx="10.500" cy="6.500" r="5.500" /><path d="M6.700 10.500L.7 16.300" /></Glyph>
          <input aria-label="Search" placeholder="Type here to search" />
        </Search>
        <TaskButton aria-label="Cortana"><Glyph w={18} h={18} s="#fff" sw={2}><circle cx="9" cy="9" r="7" /></Glyph></TaskButton>
        <TaskButton aria-label="Task view">
          <Glyph w={17} h={16} s="#fff" sw={1.200}>
            <path d="M.6 0v2.500h10.300V0M.6 16v-2.500h10.300V16M.6 5h10.300v6H.6zM14.500 0v3M14.500 8v8" />
            <path fill="#fff" stroke="none" d="M13 4.500h3v3h-3z" />
          </Glyph>
        </TaskButton>
        <Apps>
          <TaskButton aria-label="Chrome">
            <svg width="22" height="22" viewBox="0 0 22 22">
              <circle cx="11" cy="11" r="11" fill="#ffcd46" />
              <path d="M1.500 5.500A11 11 0 0 0 10.500 22l4.800-8.600L11 11z" fill="#1da462" />
              <path d="M10.500 22l4.500-8.500A5 5 0 0 0 15 8.500l-.5-2.400h6.400A11 11 0 0 1 10.500 22z" fill="#ffcd46" />
              <path d="M1.500 5.500L6.700 13.500 11 6.100h9.800A11 11 0 0 0 1.500 5.500z" fill="#dd5144" />
              <circle cx="11" cy="11" r="5" fill="#f1f1f1" />
              <circle cx="11" cy="11" r="4" fill="#4c8bf5" />
            </svg>
            <Running $kind="one" />
          </TaskButton>
          <TaskButton aria-label="File Explorer">
            <svg width="22" height="19" viewBox="0 0 22 19">
              <path d="M0 1h9l1.500 2H22v15H0z" fill="#ffd667" />
              <path d="M0 1h9l1 1.500-1 1.500H0z" fill="#e5a50a" />
              <path d="M4 19v-6.500a2 2 0 0 1 2-2h10a2 2 0 0 1 2 2V19h-4.500v-4.500h-5V19z" fill="#3a96dd" />
            </svg>
            <Running $kind="many" />
          </TaskButton>
          <TaskButton aria-label="Visual Studio Code">
            <svg width="24" height="24" viewBox="0 0 24 24">
              <path d="M17.500 0L6 10.500 2 7.300.3 8.200v1.600L17.500 24z" fill="#0a7bc8" />
              <path d="M17.500 24L6 13.500l-4 3.200-1.700-.9v-1.600L17.500 0z" fill="#1590dd" />
              <path d="M17.500 0L24 3v18l-6.500 3z" fill="#2aa6f2" />
              <path d="M17.500 7v10L11.300 12z" fill="#1b2b35" />
            </svg>
            <Running $kind="one" />
          </TaskButton>
          <TaskButton aria-label="Acrobat">
            <svg width="21" height="21" viewBox="0 0 21 21">
              <rect width="21" height="21" rx="4" fill="#b30b00" />
              <path d="M5 15.500c0-2 4-3.500 8-3.500s4 2 2.500 1.800C13 13.500 9.500 9 9.800 6s1.800-1 1.200 1.500C10.300 11 7.500 16 6 16.500c-.6.200-1-.4-1-1z" fill="none" stroke="#fff" strokeWidth="1.200" />
            </svg>
            <Running $kind="many" />
          </TaskButton>
          <TaskButton aria-label="Discord">
            <svg width="20" height="21" viewBox="0 0 20 21">
              <path d="M2 0h16a2 2 0 0 1 2 2v19l-3.500-3H2a2 2 0 0 1-2-2V2a2 2 0 0 1 2-2z" fill="#7289da" />
              <path d="M5.500 5.500c3-1.300 6-1.300 9 0 1.300 2.500 2 5 1.700 7.200-1.200.9-2.200 1.300-3 1.400l-.8-1.200c-1.600.4-3.200.4-4.800 0l-.8 1.200c-.8-.1-1.800-.5-3-1.400C3.500 10.500 4.200 8 5.500 5.500z" fill="#fff" />
              <circle cx="7.600" cy="10" r="1.300" fill="#7289da" /><circle cx="12.400" cy="10" r="1.300" fill="#7289da" />
            </svg>
            <Running $kind="one" />
          </TaskButton>
          <TaskButton $on aria-label="Illustrator">
            <AiLogo size={22} />
            <Running $kind="full" />
          </TaskButton>
        </Apps>
        <Tray>
          <TrayButton $w={32} aria-label="Help">
            <svg width="22" height="22" viewBox="0 0 22 22">
              <circle cx="11" cy="11" r="10.500" fill="#fff" />
              <circle cx="11" cy="11" r="9" fill="#1191d8" />
              <path d="M7.500 8.500c0-4.500 7-4.500 7 0 0 2.500-3.500 2.500-3.500 5M11 15v2.500" fill="none" stroke="#fff" strokeWidth="2.400" />
            </svg>
          </TrayButton>
          <TrayButton $w={30} aria-label="Hidden icons"><Glyph w={12} h={8} s="#fff" sw={1.300}><path d="M.5 7L6 1.500 11.500 7" /></Glyph></TrayButton>
          <TrayButton $w={32} aria-label="Microphone">
            <Glyph w={11} h={16} s="#fff" sw={1.200}><rect x="3" y="0" width="5" height="11" rx="1" fill="#fff" stroke="none" /><path d="M.6 8v4.400h9.800V8M5.500 12.500v3M2.500 15.400h6" /></Glyph>
          </TrayButton>
          <TrayButton $w={34} aria-label="Battery">
            <Glyph w={17} h={12} s="#fff" sw={1.200}><path d="M5.500 2.600H15v7.800H5.500V6M15.500 5H16.500v3M1.500 0v2M4 0v2M.5 2.500h4.500v2.500L3 6.500v4H5" /><path fill="#fff" stroke="none" d="M7 4.200h6.500v4.600H7z" /></Glyph>
          </TrayButton>
          <TrayButton $w={32} aria-label="Network">
            <Glyph w={13} h={13} s="#fff" sw={1.300}><path d="M5.500 12.500a7 7 0 0 1 7-6.500M8.500 12.500a4 4 0 0 1 4-3.500" /><path d="M.7 12.500A12 12 0 0 1 12.500.7M3 12.500A9.500 9.500 0 0 1 12.500 3.500" stroke="#6f7b83" /><circle cx="11.500" cy="11.500" r="1.300" fill="#fff" stroke="none" /></Glyph>
          </TrayButton>
          <TrayButton $w={30} aria-label="Volume">
            <Glyph w={17} h={14} s="#fff" sw={1.200}><path d="M.6 4.500h2.500L6.500 1.500v11L3.100 9.500H.6zM8.500 5c1 1 1 3 0 4" /><path d="M10.500 3.200c2 2 2 5.600 0 7.600" stroke="#c0c6ca" /><path d="M12.800 1.500c3 3 3 8 0 11" stroke="#737f87" /></Glyph>
          </TrayButton>
          <TrayButton $w={42} aria-label="Windows Ink">
            <Glyph w={17} h={17} s="#fff" sw={1.300}><path d="M5 14L6 9l5-7.500c1-1 3 0 2.500 1.500L9 10.500zM9 4l3 2M4.500 9C1 8.500-1 13 2 15s5-2 9-4.500M11.500 9.500c3-1.500 3-3.500 5-2s0 4-2 3.500" /></Glyph>
          </TrayButton>
          <TrayButton $w={38} aria-label="Touch keyboard">
            <Glyph w={23} h={13} s="#fff" sw={1.200}><path d="M.6.600h21.800v11.800H.6z" /><path d="M3 3.500h17M3 6.500h17" strokeDasharray="1.500 1.300" /><path d="M3 9.500h2M6.500 9.500h10M18 9.500h2" /></Glyph>
          </TrayButton>
          <TrayButton $w={40} aria-label="Touchpad">
            <Glyph w={16} h={13} s="#fff" sw={1.200}><path d="M.6.600h14.800v11.800H.6zM.6 7.500h14.800M8 7.500v5" /></Glyph>
          </TrayButton>
          <TrayButton $w={36}>ENG</TrayButton>
          <TrayButton $w={64}>
            <span>12:05 AM<br />4/18/2021</span>
          </TrayButton>
          <TrayButton $w={40} aria-label="Notifications">
            <Glyph w={17} h={17} s="#fff">
              <path fill="#fff" stroke="none" d="M0 0h16v12.500H7L4 16v-3.500H0z" />
              <path d="M3 3.500h10M3 6.500h10M3 9.500h6" stroke="#333a3d" />
              <path d="M14 8a4 4 0 1 1-5 6c3 0 5-2 5-6z" fill="#fff" stroke="#333a3d" />
            </Glyph>
          </TrayButton>
          <Peek aria-label="Show desktop" />
        </Tray>
      </Taskbar>
    </Screen>
  );
}
